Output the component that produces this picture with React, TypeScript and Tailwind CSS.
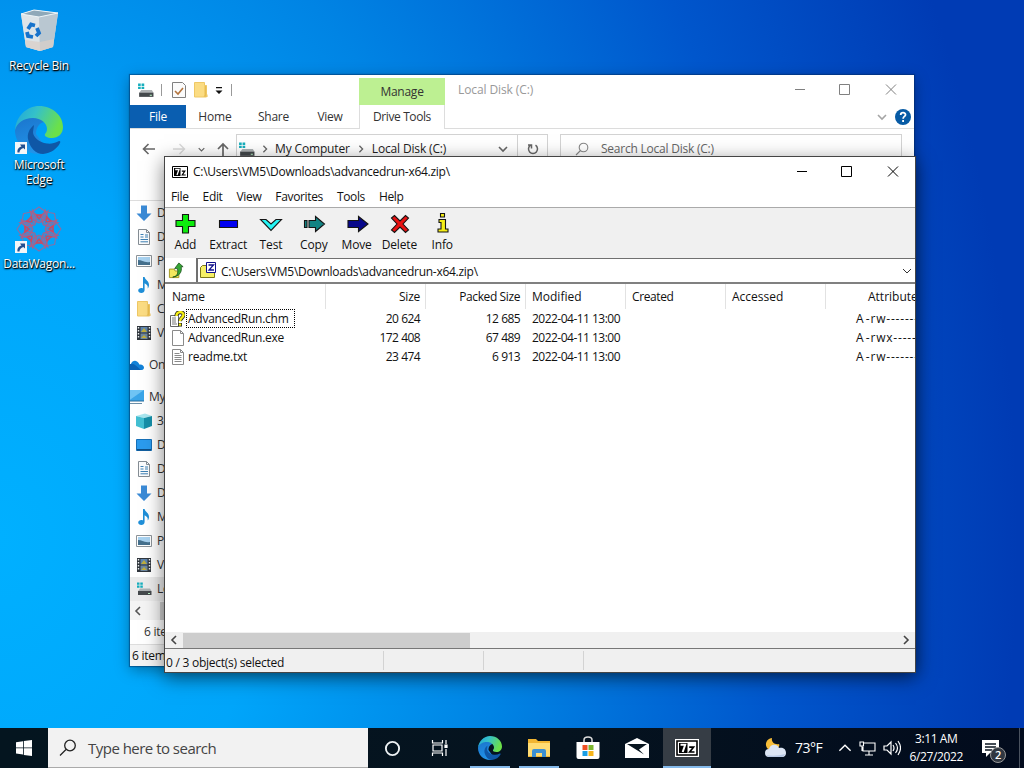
import type { ReactNode } from "react";

type IconProps = { className?: string };

function EdgeLogo({ className }: IconProps) {
  return (
    <svg viewBox="0 0 48 48" className={className}>
      <defs>
        <linearGradient id="edgeTop" x1="0" y1="0" x2="1" y2="0.35">
          <stop offset="0" stopColor="#1ea4dc" />
          <stop offset="0.45" stopColor="#35c1c9" />
          <stop offset="1" stopColor="#6be04a" />
        </linearGradient>
        <linearGradient id="edgeBody" x1="0" y1="0" x2="0.3" y2="1">
          <stop offset="0" stopColor="#1b74cc" />
          <stop offset="1" stopColor="#2193e8" />
        </linearGradient>
      </defs>
      <path d="M0 24C1 16 9 11 18 11c5 0 9 2 12 5-5 0-9 5-9 12l11 15c-3 3-5 5-8 5C10 48 0 37 0 24Z" fill="url(#edgeBody)" />
      <path d="M19 19c-5 4-7 9-6 14 2 9 8 15 15 15 8-1 14-5 17-11 .8-1.500-.2-2.500-1.500-1.800C40 37 36 38 32 37.500 24 36.500 18 31 18 26Z" fill="#0f57a6" />
      <path d="M0 24C1 10 12 0 24 0c14 0 24 10 24 21 0 7-5 11-11 11-5 0-8-2-7-4 1-1 2-3 2-5 0-6-6-11-14-11C8 12 2 17 0 24Z" fill="url(#edgeTop)" />
    </svg>
  );
}

function RecycleBin() {
  return (
    <svg viewBox="0 0 40 44" className="h-11 w-10">
      <path d="M2 5 15 1l24 3-5 34-13 4L7 38Z" fill="#cfdce4" />
      <path d="M2 5 20 8l1 34L7 38Z" fill="#dce4e8" />
      <path d="m20 8 19-4-5 34-13 4Z" fill="#b9c7d1" />
      <path d="m2 5 13-4 24 3-19 4Z" fill="#8fa9b9" stroke="#eef5f8" strokeWidth="1" />
      <path d="m6 31 15 2 14-3-1 8-13 4-14-4Z" fill="#d9cfc8" opacity=".75" />
      <g fill="none" stroke="#1673cc" strokeWidth="3.800">
        <path d="m9 20 3-4.500 4 1" />
        <path d="m18 19 2 5-3 3" />
        <path d="m14 28-5-1-1-4" />
      </g>
    </svg>
  );
}

function RosetteIcon() {
  return (
    <svg viewBox="-24 -24 48 48" className="h-12 w-12" fill="none" strokeWidth="1.100">
      {[0, 45, 90, 135, 180, 225, 270, 315].map((angle) => (
        <g key={angle} transform={`rotate(${angle})`}>
          <path d="M0 -22 7 -17 4 -8H-4L-7 -17Z" stroke="#8b6ea3" />
          <path d="M-9 -18 0 -13 9 -18 6 -9 0 -6-6 -9Z" stroke="#a8618a" />
          <path d="M-3 -14 0 -10 3 -14Z" stroke="#c24d68" strokeWidth="1.600" />
        </g>
      ))}
    </svg>
  );
}

function ShortcutArrow() {
  return (
    <svg viewBox="0 0 12 12" className="absolute bottom-0 left-0 h-3 w-3">
      <path d="M0 0h12v12H0Z" fill="#f4f6f8" />
      <path d="M2.500 10.500C2 7 4 5 6.500 4.500L5 2.500h5v5L8.300 6C6 7 4.500 8 4.500 10.500Z" fill="#234f8f" />
    </svg>
  );
}

function DriveIcon({ className = "h-4 w-4" }: IconProps) {
  return (
    <svg viewBox="0 0 16 16" className={className}>
      <path d="M1 1.500h2.500v2.200H1zM4.300 1.500h2.500v2.200H4.300zM1 4.500h2.500v2.200H1zM4.300 4.500h2.500v2.200H4.300z" fill="#16aebd" />
      <path d="m3 9 1-1.500h10L15.500 10H2Z" fill="#aeb3b5" />
      <path d="M2 10h13.500v4H2z" fill="#44494c" />
      <path d="M12 12h2v1h-2z" fill="#b5f0c0" />
    </svg>
  );
}

function FolderIcon() {
  return (
    <svg viewBox="0 0 16 16" className="h-4 w-4">
      <path d="M1.500.5h10v3h2V15h-12Z" fill="#fbdc83" />
      <path d="M11.500 3.500h2v9h1V15h-4l1-2Z" fill="#e9bd50" />
      <path d="M1.500.5h10v3h2V15h-12Z" fill="none" stroke="#efc865" />
    </svg>
  );
}

function DownArrowIcon() {
  return (
    <svg viewBox="0 0 16 16" className="h-4 w-4">
      <path d="M5 .5h6v8h4.500L8 16 .5 8.500H5Z" fill="#3a8ad6" />
    </svg>
  );
}

function DocumentIcon() {
  return (
    <svg viewBox="0 0 16 16" className="h-4 w-4">
      <path d="M2.500.5h8l3 3v12h-11Z" fill="#fbfcfd" stroke="#858d94" />
      <path d="M10.500.5v3h3" fill="none" stroke="#858d94" />
      <path d="M4.500 5.500h3M4.500 8h3M9 6h3M9 8h3M4.500 10.500H12M4.500 12.800H12" stroke="#3d80b4" />
    </svg>
  );
}

function PictureIcon() {
  return (
    <svg viewBox="0 0 16 16" className="h-4 w-4">
      <path d="M.5 2.500h15v11H.5Z" fill="#fff" stroke="#8c9399" />
      <path d="M2 4h12v8H2z" fill="#a8d2f0" />
      <path d="M2 7c4 0 6 3 12 2v3H2Z" fill="#45708d" />
    </svg>
  );
}

function MusicIcon() {
  return (
    <svg viewBox="0 0 16 16" className="h-4 w-4">
      <path d="M7 0h1.600c.4 3 4.900 4 4.400 8.500-.1 1.300-.6 2.300-1.300 3 .5-3-.9-4-3.100-5.200V13c0 1.800-1.500 3-3.300 3S2.200 15 2.200 13.500 3.700 11 5.300 11c.7 0 1.200.1 1.700.4Z" fill="#1f8fd8" />
    </svg>
  );
}

function VideoIcon() {
  return (
    <svg viewBox="0 0 16 16" className="h-4 w-4">
      <path d="M1 1h14v14H1z" fill="#30363d" />
      <path d="M4.500 2h7v5.500h-7z" fill="#5c83ae" />
      <path d="M4.500 8.500h7V14h-7z" fill="#6c87a0" />
      <path d="m5 7 3-4 3 4ZM5 13l3-3 3 3Z" fill="#bfae3d" />
      <path d="M2.500 2v12M13.500 2v12" stroke="#eceff1" strokeWidth="1.400" strokeDasharray="1.500 1.500" />
    </svg>
  );
}

function CloudIcon() {
  return (
    <svg viewBox="0 0 16 12" className="h-3 w-4">
      <path d="M3 11a3 3 0 0 1 0-6C4 2 7 1 9 2.500c1.500 1 2 2 2.300 3C14 5 16 6.500 16 8.500S14.500 11 13 11Z" fill="#1382d8" />
      <path d="M3 5c3-1 6 3 10 6H3a3 3 0 0 1 0-6Z" fill="#0a62b5" />
    </svg>
  );
}

function MonitorIcon() {
  return (
    <svg viewBox="0 0 16 16" className="h-4 w-4">
      <path d="M0 1h16v11H0z" fill="#3aa5e8" />
      <path d="M0 1h16L0 12Z" fill="#6fc4f4" />
      <path d="M0 12h16" stroke="#2a6d9c" />
      <path d="M2 14.500h12" stroke="#6d8fa8" />
    </svg>
  );
}

function CubeIcon() {
  return (
    <svg viewBox="0 0 16 16" className="h-4 w-4">
      <path d="m0 3 9-2.500L16 3 7.500 5Z" fill="#a9e6ef" />
      <path d="M0 3 8 5v11l-8-3Z" fill="#43bfd2" />
      <path d="m8 5 8-2v10l-8 3Z" fill="#168fa8" />
    </svg>
  );
}

function DesktopIcon() {
  return (
    <svg viewBox="0 0 16 16" className="h-4 w-4">
      <path d="M.5 2.500h15v11H.5Z" fill="#2b9bee" stroke="#1670b8" />
      <path d="M1 12h14v1.500H1z" fill="#0f4f87" />
    </svg>
  );
}

function Chevron({ dir, className = "h-2 w-2", thin }: { dir: "left" | "right" | "down" | "up"; className?: string; thin?: boolean }) {
  const d = { left: "M7 1 3 5l4 4", right: "m3 1 4 4-4 4", down: "m1 3 4 4 4-4", up: "m1 7 4-4 4 4" }[dir];
  return (
    <svg viewBox="0 0 10 10" className={className} fill="none" stroke="currentColor" strokeWidth={thin ? 1 : 1.6}>
      <path d={d} />
    </svg>
  );
}

function WindowButtons({ className }: IconProps) {
  return (
    <div className={`flex ${className}`}>
      <svg viewBox="0 0 46 30" className="h-[30px] w-[46px]" stroke="currentColor" fill="none">
        <path d="M18 14.500h10" />
      </svg>
      <svg viewBox="0 0 46 30" className="h-[30px] w-[46px]" stroke="currentColor" fill="none">
        <path d="M16.500 9.500h10v10h-10Z" />
      </svg>
      <svg viewBox="0 0 46 30" className="h-[30px] w-[46px]" stroke="currentColor" fill="none">
        <path d="m17 9.500 10 10m0-10-10 10" />
      </svg>
    </div>
  );
}

function SevenZipMark() {
  return (
    <svg viewBox="0 0 16 12" className="h-3 w-4">
      <path d="M.5.5h15v11H.5Z" fill="#fff" stroke="#000" />
      <path d="M2 2h6.500v8H2z" fill="#000" />
      <path d="M3.200 3.500H7L5 9" fill="none" stroke="#fff" strokeWidth="1.300" />
      <path d="M9.800 5.200h3L10.300 9h3.400" fill="none" stroke="#000" strokeWidth="1.200" />
    </svg>
  );
}

function SevenZipLarge() {
  return (
    <svg viewBox="0 0 24 18" className="h-[18px] w-6">
      <path d="M0 0h24v18H0z" fill="#fff" />
      <path d="M2 2h20v14H2z" fill="#fff" stroke="#000" strokeWidth="1.600" />
      <path d="M4 4h8.500v10H4z" fill="#000" />
      <path d="M5.500 5.800h4.700L7.700 13" fill="none" stroke="#fff" strokeWidth="2" />
      <path d="M14.200 8.200h4.300L14.700 13h4.800" fill="none" stroke="#000" strokeWidth="1.700" />
    </svg>
  );
}

function DesktopItem({ icon, label, shortcut }: { icon: ReactNode; label: string; shortcut?: boolean }) {
  return (
    <div className="flex w-[78px] flex-col items-center">
      <div className="relative flex h-12 w-12 items-center justify-center">
        {icon}
        {shortcut && <ShortcutArrow />}
      </div>
      <div className="mt-[3px] text-center leading-[15px] text-white [text-shadow:0_1px_2px_#000,1px_1px_1px_#000]">{label}</div>
    </div>
  );
}

const quickAccess: [ReactNode, string][] = [
  [<DownArrowIcon />, "Downloads"],
  [<DocumentIcon />, "Documents"],
  [<PictureIcon />, "Pictures"],
  [<MusicIcon />, "Music"],
  [<FolderIcon />, "C"],
  [<VideoIcon />, "Videos"],
];

const computer: [ReactNode, string][] = [
  [<CubeIcon />, "3D Objects"],
  [<DesktopIcon />, "Desktop"],
  [<DocumentIcon />, "Documents"],
  [<DownArrowIcon />, "Downloads"],
  [<MusicIcon />, "Music"],
  [<PictureIcon />, "Pictures"],
  [<VideoIcon />, "Videos"],
  [<DriveIcon />, "Local Disk"],
];

function NavRow({ icon, label, root, active }: { icon: ReactNode; label: string; root?: boolean; active?: boolean }) {
  return (
    <div className={`flex h-6 shrink-0 items-center gap-[5px] ${root ? "" : "pl-1.5"} ${active ? "bg-[#ebebeb]" : ""}`}>
      <span className={`flex shrink-0 ${root ? "-ml-0.5" : ""}`}>{icon}</span>
      <span className="whitespace-nowrap">{label}</span>
    </div>
  );
}

function ExplorerWindow() {
  return (
    <div className="absolute left-[130px] top-[75px] flex h-[591px] w-[784px] flex-col overflow-hidden bg-white text-[#333] shadow-[0_0_1px_1px_rgba(0,40,90,0.45),0_4px_14px_rgba(0,0,0,0.35)]">
      <div className="flex h-[30px] shrink-0">
        <div className="flex w-[229px] items-center pl-[7px]">
          <DriveIcon className="h-[17px] w-[17px]" />
          <span className="ml-[7px] h-3 w-px bg-[#999]" />
          <svg viewBox="0 0 14 16" className="ml-2.5 h-4 w-[14px]">
            <path d="M.5.500h10l3 3v12H.5Z" fill="#fbfbfb" stroke="#808080" />
            <path d="m3 9 3 3 5-6" fill="none" stroke="#b3743e" strokeWidth="1.600" />
          </svg>
          <span className="ml-[7px]"><FolderIcon /></span>
          <svg viewBox="0 0 8 8" className="ml-[6px] mt-0.5 h-2 w-2">
            <path d="M1 0h6v1.300H1zM.5 3.500h7L4 7Z" fill="#111" />
          </svg>
          <span className="ml-2 h-3 w-px bg-[#999]" />
        </div>
        <div className="mt-[3px] flex w-[86px] items-center justify-center bg-[#bdf092]">Manage</div>
        <div className="ml-[13px] flex grow items-center text-[#999] tracking-[-0.1px]">Local Disk (C:)</div>
        <WindowButtons className="-mr-px text-[#808080]" />
      </div>
      <div className="flex h-6 shrink-0 border-b border-[#dcdcdc]">
        <div className="flex w-14 items-center justify-center bg-[#0a5eb0] text-white">File</div>
        <div className="flex w-[58px] items-center justify-center tracking-[-0.1px]">Home</div>
        <div className="flex w-[59px] items-center justify-center">Share</div>
        <div className="flex w-[56px] items-center justify-center pr-0.5">View</div>
        <div className="-mb-px flex w-[86px] items-center justify-center border-x border-[#ddd] bg-white pb-px">
          <span className="tracking-[-0.4px]">Drive Tools</span>
        </div>
        <div className="flex grow items-center justify-end gap-2 pr-[3px] text-[#a5a5a5]">
          <Chevron dir="down" className="h-2.5 w-2.5" />
          <svg viewBox="0 0 16 16" className="h-4 w-4">
            <circle cx="8" cy="8" r="8" fill="#075ba5" />
            <path d="M5.700 6c0-3 4.800-3 4.800-.3C10.500 7.500 8.100 7.400 8.100 9.800M8.100 11v2" fill="none" stroke="#fff" strokeWidth="1.800" />
          </svg>
        </div>
      </div>
      <div className="flex h-[72px] shrink-0 border-b border-[#ddd] pt-[5px]">
        <div className="flex h-[30px] w-[106px] items-center text-[#666]">
          <svg viewBox="0 0 14 12" className="ml-3 h-3 w-3.5" fill="none" stroke="currentColor" strokeWidth="1.600">
            <path d="M13 6H1.500M6.500 1l-5 5 5 5" />
          </svg>
          <svg viewBox="0 0 14 12" className="ml-4 h-3 w-3.5" fill="none" stroke="#d9d9d9" strokeWidth="1.400">
            <path d="M1 6h11.500M7.500 1l5 5-5 5" />
          </svg>
          <Chevron dir="down" className="ml-3 h-[7px] w-[7px]" />
          <svg viewBox="0 0 12 14" className="ml-3 h-3.5 w-3" fill="none" stroke="currentColor" strokeWidth="1.700">
            <path d="M6 14V2M1 7l5-5 5 5" />
          </svg>
        </div>
        <div className="flex h-[30px] w-[312px] items-center border border-[#d3d3d3]">
          <DriveIcon className="ml-px h-[17px] w-[17px]" />
          <span className="ml-1.5 text-[#666]"><Chevron dir="right" /></span>
          <span className="ml-[6px] tracking-[-0.15px] text-[#222]">My Computer</span>
          <span className="ml-[7px] text-[#666]"><Chevron dir="right" /></span>
          <span className="ml-[7px] tracking-[-0.15px] text-[#222]">Local Disk (C:)</span>
          <span className="ml-auto mr-[9px] text-[#666]"><Chevron dir="down" className="h-2.5 w-2.5" /></span>
          <span className="flex h-full w-[30px] items-center justify-center border-l border-[#d3d3d3]">
            <svg viewBox="0 0 12 12" className="h-3 w-3" fill="none" stroke="#666" strokeWidth="1.500">
              <path d="M3.500 2.200A4.500 4.500 0 1 0 8.500 2.200M1 2h3.500v3.500" />
            </svg>
          </span>
        </div>
        <div className="ml-3 flex h-[30px] w-[342px] items-center border border-[#d3d3d3] text-[#666]">
          <svg viewBox="0 0 14 14" className="ml-3.5 h-3.5 w-3.5" fill="none" stroke="#888" strokeWidth="1.100">
            <circle cx="8.500" cy="5.500" r="4.300" />
            <path d="M5.500 8.500 1 13" />
          </svg>
          <span className="ml-3 tracking-[-0.23px]">Search Local Disk (C:)</span>
        </div>
      </div>
      <div className="flex w-9 grow flex-col overflow-hidden">
        {quickAccess.map(([icon, label]) => <NavRow key={label} icon={icon} label={label} />)}
        <div className="h-2 shrink-0" />
        <NavRow icon={<CloudIcon />} label="OneDrive" root />
        <div className="h-2 shrink-0" />
        <NavRow icon={<MonitorIcon />} label="My Computer" root />
        {computer.map(([icon, label]) => <NavRow key={label} icon={icon} label={label} active={label === "Local Disk"} />)}
        <div className="flex h-[19px] shrink-0 items-center bg-[#f4f4f4] pl-[3px] pt-px">
          <span className="text-[#555]"><Chevron dir="left" className="h-2.5 w-2.5" /></span>
          <span className="ml-[17px] h-[18px] w-4 shrink-0 bg-[#cdcdcd]" />
        </div>
        <div className="flex h-6 shrink-0 items-center whitespace-nowrap pl-3.5">6 items</div>
        <div className="flex grow items-center whitespace-nowrap border-t border-[#ddd] bg-[#f3f3f3] pl-0.5 pt-px text-[#111]">6 items</div>
      </div>
    </div>
  );
}

const toolbar: [string, ReactNode][] = [
  ["Add", <path d="M9.500 2.500h6v6H22v6h-6.500V21h-6v-6.500H3v-6h6.500Z" fill="#0dec0d" />],
  ["Extract", <path d="M3.500 8.500h18v7h-18Z" fill="#0000f0" />],
  ["Test", <path d="M1.500 7.500H7l5 4.500 5-4.500h5.500L12 18.500Z" fill="#25f5f5" />],
  ["Copy", <path d="M2.500 8.500H5v7H2.500ZM7 8.500h6.500V4.500l9 7.500-9 7.500v-4H7Z" fill="#128383" />],
  ["Move", <path d="M3 8.500h10.500V4.500L23 12l-9.500 7.500v-4H3Z" fill="#08088b" />],
  ["Delete", <path d="m4.500 6 3-2.500L13 9l5.500-5.500 3 2.500-5.500 6 5.500 6-3 2.500L13 15l-5.500 5.500-3-2.500 5.500-6Z" fill="#e91212" />],
  ["Info", <path d="M10.500 1.500h4V5h-4ZM9 7.500h6.500V17H18v3H8v-3h3v-6.500H9Z" fill="#f4ed16" />],
];

const columns: [string, string][] = [
  ["Name", "w-[161px] pl-[7px] tracking-[-0.2px]"],
  ["Size", "w-[100px] justify-end pr-[5px]"],
  ["Packed Size", "w-[100px] justify-end pr-[5px] tracking-[-0.4px]"],
  ["Modified", "w-[100px] pl-[6px] tracking-[0px]"],
  ["Created", "w-[100px] pl-[6px] tracking-[-0.4px]"],
  ["Accessed", "w-[100px] pl-[6px] tracking-[0px]"],
];

function ChmIcon() {
  return (
    <svg viewBox="0 0 16 16" className="-ml-px mr-px h-4 w-4">
      <path d="M1.500 4.500h8v11h-8Z" fill="#fff" stroke="#666" />
      <path d="M3 7h4M3 9h4M3 11h4M3 13h5" stroke="#777" />
      <path d="M7.500 5C7 0 15 0 14.500 4.300 14 7 11.500 6.500 11 10M11 12v3.500" fill="none" stroke="#222" strokeWidth="4" />
      <path d="M7.500 5C7 0 15 0 14.500 4.300 14 7 11.500 6.500 11 10M11 12.500v2.300" fill="none" stroke="#f6ee16" strokeWidth="2.400" />
    </svg>
  );
}

function FileIcon({ lines }: { lines?: boolean }) {
  return (
    <svg viewBox="0 0 16 16" className="h-4 w-4">
      <path d="M2.500.5h8l3 3v12h-11Z" fill="#fff" stroke="#8a8a8a" />
      <path d="M10.500.5v3h3" fill="none" stroke="#8a8a8a" />
      {lines && <path d="M4.500 4.500h5M4.500 6.500h7M4.500 8.500h7M4.500 10.500h7M4.500 12.500h7" stroke="#8a8a8a" />}
    </svg>
  );
}

const files = [
  { icon: <ChmIcon />, name: "AdvancedRun.chm", size: "20 624", packed: "12 685", attrs: "A -rw-------", focus: true },
  { icon: <FileIcon />, name: "AdvancedRun.exe", size: "172 408", packed: "67 489", attrs: "A -rwx------" },
  { icon: <FileIcon lines />, name: "readme.txt", size: "23 474", packed: "6 913", attrs: "A -rw-------" },
];

const archivePath = "C:\\Users\\VM5\\Downloads\\advancedrun-x64.zip\\";

function ArchiveWindow() {
  return (
    <div className="absolute left-[164px] top-[156px] flex h-[517px] w-[752px] flex-col overflow-hidden border border-[#454545] bg-white text-[#111] shadow-[0_5px_18px_rgba(0,0,0,0.5)]">
      <div className="flex h-[30px] shrink-0 items-center">
        <span className="ml-[7px] flex"><SevenZipMark /></span>
        <span className="ml-[5px] tracking-[-0.27px]">{archivePath}</span>
        <WindowButtons className="-mr-0.5 ml-auto text-black" />
      </div>
      <div className="flex h-[21px] shrink-0 items-center gap-[14px] border-b border-[#aaa] pl-1.5">
        {["File", "Edit", "View", "Favorites", "Tools", "Help"].map((item) => <span key={item} className="tracking-[-0.35px]">{item}</span>)}
      </div>
      <div className="flex h-[50px] shrink-0 bg-[#f0f0f0]">
        {toolbar.map(([label, shape]) => (
          <div key={label} className="-ml-px mr-px flex w-[42.8px] flex-col items-center pt-1">
            <svg viewBox="0 0 24 24" className="h-6 w-6" stroke="#151515" strokeWidth="1.100">{shape}</svg>
            <span className="mt-px leading-4 tracking-[-0.15px]">{label}</span>
          </div>
        ))}
      </div>
      <div className="flex h-[26px] shrink-0 border-b-2 border-[#808080] bg-white">
        <div className="flex w-[31px] items-center pl-[3px]">
          <svg viewBox="0 0 18 18" className="h-[17px] w-[17px]">
            <path d="M1.500 7.500h5l1 2h4v7h-10Z" fill="#f4e75e" stroke="#a29721" />
            <path d="M5 16c5-1 6-4 5-9H7l4.500-6L16 5h-2c1 6-2 10-9 11Z" fill="#35a735" stroke="#174c17" strokeWidth=".8" />
          </svg>
        </div>
        <div className="flex grow items-center border-l-2 border-t border-[#707070] pl-[2px]">
          <svg viewBox="0 0 17 16" className="-mt-0.5 h-4 w-[17px]">
            <path d="M.5 15.500v-10l2-2h4v2h8v10Z" fill="#f6f066" stroke="#7b7718" />
            <path d="M6.500.5h9v10h-9Z" fill="#fff" stroke="#11118c" />
            <path d="M8.500 3h5L9 8h5" fill="none" stroke="#11118c" strokeWidth="1.300" />
          </svg>
          <span className="ml-1 pt-0.5 tracking-[-0.27px]">{archivePath}</span>
          <span className="ml-auto mr-[3px] text-[#333]"><Chevron dir="down" className="h-2.5 w-2.5" thin /></span>
        </div>
      </div>
      <div className="flex h-[25px] shrink-0">
        {columns.map(([label, cls]) => (
          <div key={label} className={`flex shrink-0 items-center border-r border-[#e2e2e2] ${cls}`}>{label}</div>
        ))}
        <div className="flex w-[89px] shrink-0 items-center overflow-hidden whitespace-nowrap pl-[42px] tracking-[0px]">Attributes</div>
      </div>
      {files.map((file) => (
        <div key={file.name} className="flex h-[19px] shrink-0 items-center">
          <div className="flex w-[161px] items-center pl-[5px]">
            {file.icon}
            <span className={file.focus ? "flex h-[19px] w-[109px] items-center border border-dotted border-black pl-px" : "pl-0.5"}>{file.name}</span>
          </div>
          <div className="w-[94px] text-right tracking-[-0.6px] [word-spacing:0.5px]">{file.size}</div>
          <div className="w-[100px] text-right tracking-[-0.6px] [word-spacing:0.5px]">{file.packed}</div>
          <div className="w-[318px] pl-3 tracking-[-0.52px]">2022-04-11 13:00</div>
          <div className="w-[77px] overflow-hidden whitespace-nowrap pl-[18px] tracking-[0.8px] [word-spacing:-2.5px]">{file.attrs}</div>
        </div>
      ))}
      <div className="grow" />
      <div className="flex h-4 shrink-0 items-center bg-[#f0f0f0] text-[#444]">
        <span className="flex w-[18px] justify-center"><Chevron dir="left" className="h-2.5 w-2.5" /></span>
        <span className="h-[15px] w-[287px] bg-[#cdcdcd]" />
        <span className="ml-auto mr-1"><Chevron dir="right" className="h-2.5 w-2.5" /></span>
      </div>
      <div className="flex h-6 shrink-0 border-t border-[#777] bg-[#f0f0f0]">
        <div className="my-0.5 flex w-[219px] items-center border-r border-[#d3d3d3] pl-px pt-[5px]">0 / 3 object(s) selected</div>
        <div className="my-0.5 w-[100px] border-r border-[#d3d3d3]" />
        <div className="my-0.5 w-[100px] border-r border-[#d3d3d3]" />
      </div>
    </div>
  );
}

function TaskButton({ children, open, active }: { children: ReactNode; open?: boolean; active?: boolean }) {
  return (
    <div className={`flex h-10 flex-col items-center ${active ? "w-12 bg-[#363d45]" : "w-[49px]"}`}>
      <div className="flex grow items-center justify-center">{children}</div>
      {(open || active) && <div className={`-mt-0.5 h-0.5 bg-[#84b9ea] ${active ? "w-12" : "w-10"}`} />}
    </div>
  );
}

function Taskbar() {
  return (
    <div className="absolute bottom-0 left-0 flex h-10 w-full bg-[linear-gradient(90deg,#04151f,#05131f_55%,#020b1d)] text-white">
      <div className="flex w-12 items-center justify-center">
        <svg viewBox="0 0 16 16" className="h-4 w-4" fill="#fff">
          <path d="m0 2.200 7-1v6.300H0ZM7.800 1 16 0v7.500H7.800ZM0 8.300h7v6.300l-7-1ZM7.800 8.300H16V16l-8.200-1.100Z" />
        </svg>
      </div>
      <div className="flex w-80 items-center border-b border-[#aaa] bg-[#f2f2f2] text-[#444]">
        <svg viewBox="0 0 18 18" className="ml-[11px] h-[18px] w-[18px]" fill="none" stroke="#222" strokeWidth="1.300">
          <circle cx="11" cy="6.500" r="5.300" />
          <path d="m7 10.500-6 6" />
        </svg>
        <span className="ml-[11px] text-[15px] tracking-[-0.52px]">Type here to search</span>
      </div>
      <div className="flex w-12 items-center justify-center">
        <svg viewBox="0 0 18 18" className="h-[17px] w-[17px]"><circle cx="9" cy="9" r="7" fill="none" stroke="#eef2f4" strokeWidth="2" /></svg>
      </div>
      <div className="mr-px flex w-[48px] items-center justify-center">
        <svg viewBox="0 0 18 16" className="h-4 w-[18px]" fill="none" stroke="#fff" strokeWidth="1.200">
          <path d="M1.500 0v3h10V0M1.500 16v-3h10v3M2 5h9v6H2ZM15 0v4M15 9v7" />
          <path d="M14 5h2v2.500h-2Z" fill="#fff" />
        </svg>
      </div>
      <TaskButton open><EdgeLogo className="h-6 w-6" /></TaskButton>
      <TaskButton open>
        <svg viewBox="0 0 22 18" className="h-[18px] w-[22px]">
          <path d="M0 0h8l2 2h12v16H0Z" fill="#f1b531" />
          <path d="M0 4h22v13H0Z" fill="#ffdc73" />
          <path d="M4 18v-6q0-2 2-2h10q2 0 2 2v6h-4v-4H8v4Z" fill="#3c90d2" />
        </svg>
      </TaskButton>
      <TaskButton>
        <svg viewBox="0 0 24 24" className="h-6 w-6">
          <path d="M8 7V4q0-3 4-3t4 3v3" fill="none" stroke="#ddd" strokeWidth="1.500" />
          <path d="M.5 6h23v15q0 2-2 2h-19q-2 0-2-2Z" fill="#fff" />
          <path d="M6.500 9h5v5h-5z" fill="#ef5125" /><path d="M12.500 9h5v5h-5z" fill="#7db72f" />
          <path d="M6.500 15h5v5h-5z" fill="#1a9ee5" /><path d="M12.500 15h5v5h-5z" fill="#f7b51b" />
        </svg>
      </TaskButton>
      <TaskButton>
        <svg viewBox="0 0 24 20" className="h-5 w-6">
          <path d="M0 6 12 0l12 6v14H0Z" fill="#fff" />
          <path d="M2 6h20l-8 5.500 5 5L2 6Z" fill="#08151f" />
        </svg>
      </TaskButton>
      <div className="w-[2px]" />
      <TaskButton active><SevenZipLarge /></TaskButton>
      <div className="ml-[52px] flex items-center">
        <svg viewBox="0 0 24 22" className="h-[22px] w-6">
          <path d="M9 1C3 2 1 8 5 12h9c2-2 3-4 2-5-4 1-8-2-7-6Z" fill="#f7bd39" />
          <path d="M6 20a4 4 0 0 1 0-8c1-5 8-6 10-1 5-1 7 2 7 5 0 2-1 4-4 4Z" fill="#dce5f4" />
          <path d="M3 18c5 1 12 1 19-1-1 2-2 3-3 3H6Z" fill="#b7c8e4" />
        </svg>
        <span className="ml-2 text-sm tracking-[-0.5px]">73°F</span>
      </div>
      <div className="ml-4 flex items-center gap-[7px]">
        <Chevron dir="up" className="h-[14px] w-[14px]" thin />
        <svg viewBox="0 0 17 15" className="h-[15px] w-[17px]" fill="none" stroke="#fff" strokeWidth="1.100">
          <path d="M5 2h11v8H4V6M10 10v4M6 14h8M1 1h3.500v4H1ZM3 5v5" />
        </svg>
        <svg viewBox="0 0 18 16" className="h-4 w-[18px]" fill="none" stroke="#fff" strokeWidth="1.200">
          <path d="M1 6h3l4-4v12l-4-4H1ZM10 5q2 3 0 6M12.500 3q4 5 0 10M15 1q5 7 0 14" />
        </svg>
      </div>
      <div className="ml-[7px] flex w-[56px] flex-col items-center justify-center whitespace-nowrap leading-[18px] tracking-[-0.4px]">
        <span>3:11 AM</span>
        <span>6/27/2022</span>
      </div>
      <div className="relative ml-auto flex w-[37px] items-center">
        <svg viewBox="0 0 17 17" className="h-[17px] w-[17px]">
          <path d="M0 0h17v13H8l-4 4v-4H0Z" fill="#fff" />
          <path d="M3 4h11M3 7h11M3 10h7" stroke="#0a1521" strokeWidth="1.300" />
        </svg>
        <span className="absolute left-2 top-[19px] flex h-4 w-4 items-center justify-center rounded-full border border-[#999] bg-[#303741] text-[11px] font-semibold">2</span>
      </div>
      <div className="mr-1 w-px bg-[#4a525f]" />
    </div>
  );
}

export default function App() {
  return (
    <main className="relative h-[768px] w-[1024px] overflow-hidden bg-[radial-gradient(1060px_1400px_at_0%_70%,#00b0ff_0%,#00a5fa_25%,#0084e4_48%,#0056cc_74%,#003bb4_96%)] font-['Open_Sans','Noto_Sans',sans-serif] text-xs tracking-[-0.25px]">
      <div className="absolute left-0 top-[7px]"><DesktopItem icon={<RecycleBin />} label="Recycle Bin" /></div>
      <div className="absolute left-0 top-[106px]"><DesktopItem icon={<EdgeLogo className="h-12 w-12" />} label="Microsoft Edge" shortcut /></div>
      <div className="absolute left-0 top-[205px]"><DesktopItem icon={<RosetteIcon />} label="DataWagon..." shortcut /></div>
      <ExplorerWindow />
      <ArchiveWindow />
      <Taskbar />
    </main>
  );
}
